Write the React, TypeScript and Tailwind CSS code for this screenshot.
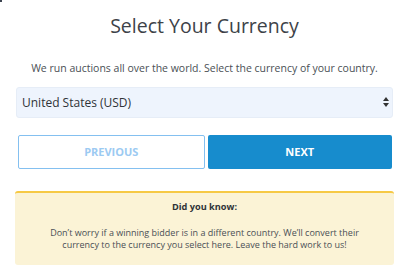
import { ChangeEvent, useState } from 'react';

const CURRENCIES = [
  'United States (USD)',
  'United Kingdom (GBP)',
  'Europe (EUR)',
  'Canada (CAD)',
  'Australia (AUD)',
];

export default function App() {
  const [currency, setCurrency] = useState(CURRENCIES[0]);

  return (
    <div className="relative h-[279px] w-[409px] bg-white font-['Open_Sans',sans-serif] text-[#444]">
      <span className="absolute left-0 top-0 h-[2px] w-[2px] bg-[#3c4450]" />

      <h1 className="pt-[13px] text-center text-[19.5px] leading-[26px] text-[#3d4248]">
        Select Your Currency
      </h1>
      <p className="mt-[22px] text-center text-[10.5px] leading-[14px] text-[#4a4f55]">
        We run auctions all over the world. Select the currency of your country.
      </p>

      <div className="mx-4 mt-[12px]">
        <div className="relative">
          <select
            value={currency}
            onChange={(e: ChangeEvent<HTMLSelectElement>) => setCurrency(e.target.value)}
            className="h-[31px] w-full appearance-none rounded-[3px] border border-[#e6edf7] bg-[#eef4fd] pl-[5px] text-[12px] text-[#2f3338] outline-none"
          >
            {CURRENCIES.map((c) => (
              <option key={c}>{c}</option>
            ))}
          </select>
          <svg
            className="pointer-events-none absolute right-[4px] top-[10px]"
            width="6"
            height="10"
            viewBox="0 0 6 10"
          >
            <path d="M3 0 L6 4 L0 4 Z" fill="#333" />
            <path d="M0 6 L6 6 L3 10 Z" fill="#333" />
          </svg>
        </div>

        <div className="mt-[17px] flex gap-[3px] pl-[2px] pr-[1px]">
          <button className="h-[34px] flex-1 rounded-[2px] border border-[#84c0f0] bg-white text-[11px] font-bold text-[#9ccaf2]">
            PREVIOUS
          </button>
          <button className="h-[34px] flex-1 rounded-[2px] bg-[#178ccd] text-[11px] font-bold text-white">
            NEXT
          </button>
        </div>
      </div>

      <div className="mx-[15px] mt-[22px] rounded-[3px] border-t-2 border-[#f6c945] bg-[#fbf3d6] px-6 pb-[14px] pt-[7px] text-center">
        <p className="text-[9.2px] font-bold leading-[14px] text-[#2f3338]">Did you know:</p>
        <p className="mt-[13px] text-[9px] leading-[12px] text-[#4a4f55]">
          Don’t worry if a winning bidder is in a different country. We’ll convert their
          <br />
          currency to the currency you select here. Leave the hard work to us!
        </p>
      </div>
    </div>
  );
}
